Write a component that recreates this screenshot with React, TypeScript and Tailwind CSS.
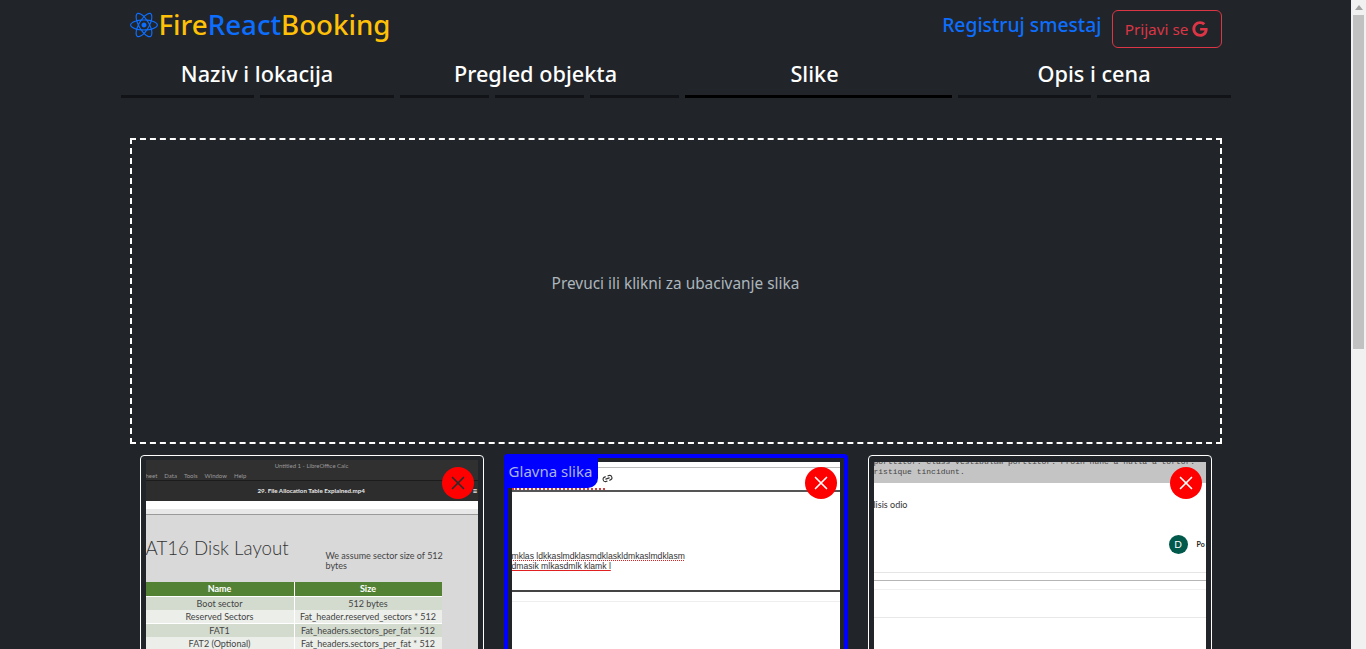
import React from 'react';
import { FaGoogle, FaReact } from 'react-icons/fa';
import { Link2, X } from 'lucide-react';

const STEPS = [
  { title: 'Naziv i lokacija', width: 'w-[273px]', titlePad: '', bars: 2, active: false },
  { title: 'Pregled objekta', width: 'w-[279px]', titlePad: 'pr-[7px]', bars: 3, active: false },
  { title: 'Slike', width: 'w-[267px]', titlePad: 'pr-[7px]', bars: 1, active: true },
  { title: 'Opis i cena', width: 'w-[273px]', titlePad: '', bars: 2, active: false },
];

const TABLE_ROWS = [
  ['Boot sector', '512 bytes'],
  ['Reserved Sectors', 'Fat_header.reserved_sectors * 512'],
  ['FAT1', 'Fat_headers.sectors_per_fat * 512'],
  ['FAT2 (Optional)', 'Fat_headers.sectors_per_fat * 512'],
];

const CloseButton: React.FC<{ dark?: boolean; className: string }> = ({ dark, className }) => (
  <button
    className={`absolute z-10 flex h-8 w-8 items-center justify-center rounded-full bg-[#ff0000] ${className} ${
      dark ? 'text-[#2b2b2b]' : 'text-white'
    }`}
  >
    <X size={22} strokeWidth={1.8} />
  </button>
);

const LectureShot = () => (
  <div className="h-full w-full overflow-hidden bg-[#d9d9d9] font-['Lato',sans-serif] text-[#444]">
    <div className="h-[21px] border-b border-[#1c1c1c] bg-[#303030] text-[6px] text-[#9a9a9a]">
      <div className="h-[12px] pt-[2px] text-center leading-[8px]">Untitled 1 - LibreOffice Calc</div>
      <div className="flex gap-[7px] whitespace-nowrap leading-[8px]">
        <span>heet</span>
        <span>Data</span>
        <span>Tools</span>
        <span>Window</span>
        <span>Help</span>
      </div>
    </div>
    <div className="flex h-[20px] items-center justify-between bg-[#2d2d2d] text-[6.2px] font-bold text-[#e6e6e6]">
      <span className="w-full pl-[4px] text-center">29. File Allocation Table Explained.mp4</span>
      <span className="text-[8px] leading-none">≡</span>
    </div>
    <div className="h-[8px] bg-white" />
    <div className="h-[6px] border-b border-[#9a9a9a] bg-[#e8e8e8]" />
    <div className="flex h-[67px] items-start whitespace-nowrap">
      <div className="w-[180px] overflow-hidden pt-[20px] text-[18.7px] font-light leading-[26px] text-[#333]">
        AT16 Disk Layout
      </div>
      <div className="pt-[36px] text-[9px] leading-[10px]">
        We assume sector size of 512
        <br />
        bytes
      </div>
    </div>
    <div className="w-[296px] text-center text-[9px]">
      <div className="grid h-[14px] grid-cols-[148px_1fr] gap-x-px bg-white font-bold leading-[14px] text-white">
        <div className="bg-[#548235]">Name</div>
        <div className="bg-[#548235]">Size</div>
      </div>
      {TABLE_ROWS.map((row, i) => (
        <div
          key={row[0]}
          className="grid h-[13.3px] grid-cols-[148px_1fr] gap-x-px bg-white pt-px leading-[13px]"
        >
          <div className={i % 2 === 0 ? 'bg-[#d3dbcf]' : 'bg-[#ebeee9]'}>{row[0]}</div>
          <div className={`whitespace-nowrap ${i % 2 === 0 ? 'bg-[#d3dbcf]' : 'bg-[#ebeee9]'}`}>{row[1]}</div>
        </div>
      ))}
    </div>
  </div>
);

const EditorShot = () => (
  <div className="h-full w-full overflow-hidden bg-white font-['Liberation_Sans',sans-serif] text-[#333]">
    <div className="h-[6px] border-b border-[#bbbbbb]" />
    <div className="flex h-[20px] items-center justify-end pr-[227px]">
      <Link2 size={11} strokeWidth={2.4} className="-rotate-[20deg]" />
    </div>
    <div className="h-[2px] w-[93px] border-t-2 border-dotted border-[#d04040]" />
    <div className="h-[61px] border-t-2 border-[#555]" />
    <div className="h-[39px] text-[8.6px] leading-[10px]">
      <div className="underline decoration-[#e02020] decoration-dotted decoration-1 underline-offset-1">
        mklas ldkkaslmdklasmdklaskldmkaslmdklasm
      </div>
      <div className="underline decoration-[#e02020] decoration-1 underline-offset-1">
        dmasik mlkasdmlk klamk l
      </div>
    </div>
    <div className="h-[12px] border-b border-t-2 border-b-[#eeeeee] border-t-[#444]" />
  </div>
);

const ForumShot = () => (
  <div className="h-full w-full overflow-hidden bg-white text-[#444]">
    <div className="h-[21px] overflow-hidden whitespace-nowrap bg-[#c4c4c4] font-['Liberation_Mono',monospace] text-[8px] leading-[9px]">
      <div className="-mt-[5px]">porttitor. Class vestibulum porttitor. Proin nunc a nulla a tortor.</div>
      <div className="pt-[1px]">ristique tincidunt.</div>
    </div>
    <div className="h-[52px] pt-[17px] font-['Lato',sans-serif] text-[9px] leading-[10px] text-[#333]">lisis odio</div>
    <div className="flex h-[37px] items-start justify-end gap-[9px]">
      <div className="flex h-[19px] w-[19px] shrink-0 items-center justify-center rounded-full bg-[#00594a] font-['Lato',sans-serif] text-[10px] text-white">
        D
      </div>
      <div className="w-[9px] pt-[5px] font-['Lato',sans-serif] text-[7px] font-bold leading-[9px] text-[#222]">Po</div>
    </div>
    <div className="h-[8px] border-t border-[#e5e5e5]" />
    <div className="h-[9px] border-t border-[#b5b5b5]" />
    <div className="h-[28px] border-t border-[#f0f0f0]" />
    <div className="border-t border-[#e8e8e8]" />
  </div>
);

export default function App() {
  return (
    <div className="flex h-screen overflow-hidden bg-[#212529] font-['Noto_Sans',sans-serif]">
      <div className="min-w-0 flex-1">
        <div className="mx-auto w-[1110px]">
          <header className="flex h-[50px] items-start justify-between px-[9px]">
            <div className="flex items-center pt-[11px] text-[27.7px] font-medium leading-none">
              <FaReact className="mr-px text-[#0d6efd]" size={28} />
              <span className="text-[#ffc107]">Fire</span>
              <span className="text-[#0d6efd]">React</span>
              <span className="text-[#ffc107]">Booking</span>
            </div>
            <div className="flex items-start">
              <a className="mr-[10px] mt-[12px] text-[19.3px] font-medium leading-[26px] text-[#0d6efd]">
                Registruj smestaj
              </a>
              <button className="mt-[10px] flex h-[38px] w-[110px] items-center justify-center gap-1 rounded-md border border-[#dc3545] text-[15.3px] text-[#dc3545]">
                Prijavi se <FaGoogle size={16} />
              </button>
            </div>
          </header>

          <div className="flex gap-[6px] pt-[8px]">
            {STEPS.map((step) => (
              <div key={step.title} className={step.width}>
                <div className={`h-[37px] text-center text-[21.7px] font-medium leading-[32px] text-white ${step.titlePad}`}>
                  {step.title}
                </div>
                <div className="flex gap-[6px]">
                  {Array.from({ length: step.bars }).map((_, i) => (
                    <div key={i} className={`h-[3px] flex-1 ${step.active ? 'bg-black' : 'bg-[#111316]'}`} />
                  ))}
                </div>
              </div>
            ))}
          </div>

          <div className="mx-[9px] mt-[40px] flex h-[306px] items-center justify-center border-2 border-dashed border-white pb-[14px] text-[15.4px] text-[#adb5bd]">
            Prevuci ili klikni za ubacivanje slika
          </div>

          <div className="mx-[19px] mt-[10px] flex items-start gap-5">
            <div className="relative mt-px h-[300px] w-[344px] rounded border border-white px-[5px] pt-[4px]">
              <CloseButton dark className="right-[9px] top-[11px]" />
              <LectureShot />
            </div>

            <div className="relative h-[300px] w-[344px] rounded border-[4px] border-[#0000ff] px-[4px] pt-[4px]">
              <div className="absolute -left-[4px] -top-[4px] z-10 flex h-[34px] w-[94px] items-center justify-center rounded-br-[10px] rounded-tl bg-[#0000ff] text-[15px] text-[#aab4e8]">
                Glavna slika
              </div>
              <CloseButton className="right-[7px] top-[9px]" />
              <EditorShot />
            </div>

            <div className="relative mt-px h-[300px] w-[344px] rounded border border-white px-[5px] pt-[6px]">
              <CloseButton className="right-[9px] top-[11px]" />
              <ForumShot />
            </div>
          </div>
        </div>
      </div>

      <div className="flex w-[15px] shrink-0 flex-col items-center bg-[#f1f1f1]">
        <div className="mt-[5px] h-0 w-0 border-x-[4px] border-b-[5px] border-x-transparent border-b-[#a3a3a3]" />
        <div className="mt-[5px] h-[334px] w-[11px] bg-[#c1c1c1]" />
      </div>
    </div>
  );
}
